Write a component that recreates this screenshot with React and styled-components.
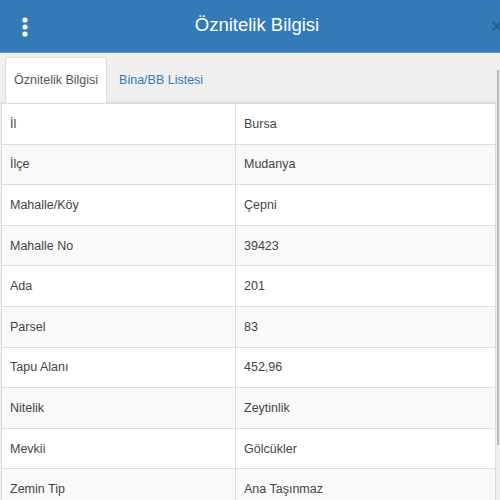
import React from 'react';
import styled, { createGlobalStyle } from 'styled-components';

const GlobalStyle = createGlobalStyle`
  html, body {
    margin: 0;
    padding: 0;
    background: #efefef;
    font-family: 'Liberation Sans', Arial, sans-serif;
  }
`;

const Panel = styled.div`
  position: relative;
  width: 500px;
  height: 500px;
  overflow: hidden;
  background: #efefef;
`;

const Header = styled.header`
  display: grid;
  grid-template-columns: 50px 1fr 36px;
  align-items: center;
  height: 52px;
  background: #337ab7;
  border-bottom: 1px solid #5b93c6;
  color: #fff;
`;

const MenuButton = styled.div`
  display: flex;
  justify-content: center;
  padding-top: 1px;
`;

const Title = styled.h1`
  margin: 0 0 2px;
  text-align: center;
  font-size: 18.5px;
  font-weight: normal;
  color: #fff;
`;

const Close = styled.div`
  display: flex;
  justify-content: flex-end;
  margin-right: -3px;
  color: #255c8c;
  font-size: 21px;
  font-weight: bold;
  opacity: 0.8;
`;

const Body = styled.div`
  padding: 4px 4px 0 1px;
`;

const TabBar = styled.nav`
  display: flex;
  gap: 3px;
  padding-left: 4px;
  border-bottom: 1px solid #dcdcdc;
`;

const Tab = styled.div`
  padding: 0 8px;
  height: 45px;
  line-height: 44px;
  font-size: 12.5px;
  color: ${(p) => (p.active ? '#555' : '#337ab7')};
  background: ${(p) => (p.active ? '#fff' : 'transparent')};
  border: 1px solid ${(p) => (p.active ? '#dddddd' : 'transparent')};
  border-bottom: none;
  margin-bottom: -1px;
`;

const Table = styled.table`
  width: 100%;
  border-collapse: collapse;
  font-size: 12.5px;
  color: #444;
  border-left: 1px solid #ddd;
  border-right: 1px solid #ddd;
`;

const Row = styled.tr`
  height: 40.6px;
  background: ${(p) => (p.striped ? '#f9f9f9' : '#fff')};
`;

const Cell = styled.td`
  padding: 0 8px;
  border: 1px solid #dddddd;
  width: ${(p) => (p.label ? '217px' : 'auto')};
  vertical-align: middle;
`;

const Scrollbar = styled.div`
  position: absolute;
  right: 1px;
  top: 70px;
  width: 2px;
  height: 375px;
  background: #b9b9b9;
`;

const rows = [
  ['İl', 'Bursa'],
  ['İlçe', 'Mudanya'],
  ['Mahalle/Köy', 'Çepni'],
  ['Mahalle No', '39423'],
  ['Ada', '201'],
  ['Parsel', '83'],
  ['Tapu Alanı', '452,96'],
  ['Nitelik', 'Zeytinlik'],
  ['Mevkii', 'Gölcükler'],
  ['Zemin Tip', 'Ana Taşınmaz'],
];

function Dots() {
  return (
    <svg width="8" height="24" viewBox="0 0 8 24">
      <circle cx="4" cy="5" r="2.6" fill="#fff" />
      <circle cx="4" cy="12" r="2.6" fill="#fff" />
      <circle cx="4" cy="19" r="2.6" fill="#fff" />
    </svg>
  );
}

export default function App() {
  return (
    <Panel>
      <GlobalStyle />
      <Header>
        <MenuButton>
          <Dots />
        </MenuButton>
        <Title>Öznitelik Bilgisi</Title>
        <Close>×</Close>
      </Header>
      <Body>
        <TabBar>
          <Tab active>Öznitelik Bilgisi</Tab>
          <Tab>Bina/BB Listesi</Tab>
        </TabBar>
        <Table>
          <tbody>
            {rows.map(([k, v], i) => (
              <Row key={k} striped={i % 2 === 1}>
                <Cell label>{k}</Cell>
                <Cell>{v}</Cell>
              </Row>
            ))}
          </tbody>
        </Table>
      </Body>
      <Scrollbar />
    </Panel>
  );
}
